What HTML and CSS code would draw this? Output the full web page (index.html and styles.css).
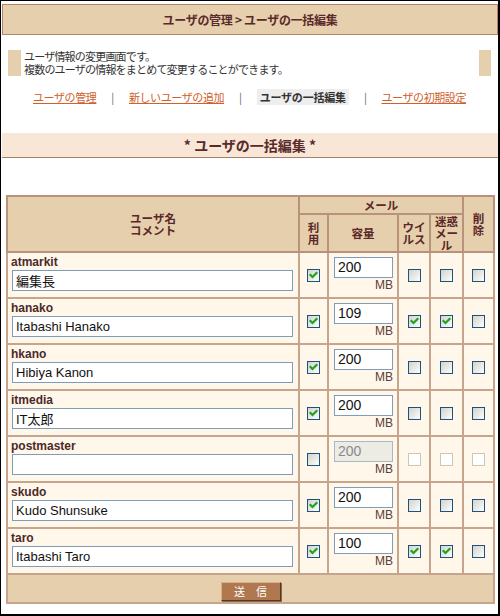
FILE: index.html
```html
<!DOCTYPE html>
<html lang="ja">
<head>
<meta charset="utf-8">
<title>ユーザの一括編集</title>
<link rel="stylesheet" href="styles.css">
</head>
<body>
<div class="frame">
  <div class="topbar">ユーザの管理 &gt; ユーザの一括編集</div>
  <div class="info">ユーザ情報の変更画面です。<br>複数のユーザの情報をまとめて変更することができます。</div>
  <div class="nav">
    <a href="#">ユーザの管理</a><span class="sep">|</span>
    <a href="#">新しいユーザの追加</a><span class="sep">|</span>
    <span class="current">ユーザの一括編集</span><span class="sep">|</span>
    <a href="#">ユーザの初期設定</a>
  </div>
  <h2 class="section">* ユーザの一括編集 *</h2>
  <table class="grid">
    <colgroup>
      <col class="c-name"><col class="c-use"><col class="c-cap"><col class="c-vir"><col class="c-spam"><col class="c-del">
    </colgroup>
    <tr class="h1">
      <th rowspan="2">ユーザ名<br>コメント</th>
      <th colspan="4">メール</th>
      <th rowspan="2">削<br>除</th>
    </tr>
    <tr class="h2">
      <th>利<br>用</th>
      <th>容量</th>
      <th>ウイ<br>ルス</th>
      <th>迷惑<br>メー<br>ル</th>
    </tr>
    <tr class="row">
      <td class="name"><div class="uid">atmarkit</div><input class="cmt" type="text" value="編集長"></td>
      <td class="ck"><span class="cb on"><svg viewBox="0 0 11 11"><polyline points="2.5,5 4.5,7 8.5,3"/></svg></span></td>
      <td class="cap"><input class="num" type="text" value="200"><div class="mb">MB</div></td>
      <td class="ck"><span class="cb"></span></td>
      <td class="ck"><span class="cb"></span></td>
      <td class="ck"><span class="cb"></span></td>
    </tr>
    <tr class="row">
      <td class="name"><div class="uid">hanako</div><input class="cmt" type="text" value="Itabashi Hanako"></td>
      <td class="ck"><span class="cb on"><svg viewBox="0 0 11 11"><polyline points="2.5,5 4.5,7 8.5,3"/></svg></span></td>
      <td class="cap"><input class="num" type="text" value="109"><div class="mb">MB</div></td>
      <td class="ck"><span class="cb on"><svg viewBox="0 0 11 11"><polyline points="2.5,5 4.5,7 8.5,3"/></svg></span></td>
      <td class="ck"><span class="cb on"><svg viewBox="0 0 11 11"><polyline points="2.5,5 4.5,7 8.5,3"/></svg></span></td>
      <td class="ck"><span class="cb"></span></td>
    </tr>
    <tr class="row">
      <td class="name"><div class="uid">hkano</div><input class="cmt" type="text" value="Hibiya Kanon"></td>
      <td class="ck"><span class="cb on"><svg viewBox="0 0 11 11"><polyline points="2.5,5 4.5,7 8.5,3"/></svg></span></td>
      <td class="cap"><input class="num" type="text" value="200"><div class="mb">MB</div></td>
      <td class="ck"><span class="cb"></span></td>
      <td class="ck"><span class="cb"></span></td>
      <td class="ck"><span class="cb"></span></td>
    </tr>
    <tr class="row">
      <td class="name"><div class="uid">itmedia</div><input class="cmt" type="text" value="IT太郎"></td>
      <td class="ck"><span class="cb on"><svg viewBox="0 0 11 11"><polyline points="2.5,5 4.5,7 8.5,3"/></svg></span></td>
      <td class="cap"><input class="num" type="text" value="200"><div class="mb">MB</div></td>
      <td class="ck"><span class="cb"></span></td>
      <td class="ck"><span class="cb"></span></td>
      <td class="ck"><span class="cb"></span></td>
    </tr>
    <tr class="row">
      <td class="name"><div class="uid">postmaster</div><input class="cmt" type="text" value=""></td>
      <td class="ck"><span class="cb"></span></td>
      <td class="cap"><input class="num off" type="text" value="200" disabled><div class="mb">MB</div></td>
      <td class="ck"><span class="cb dis"></span></td>
      <td class="ck"><span class="cb dis"></span></td>
      <td class="ck"><span class="cb dis"></span></td>
    </tr>
    <tr class="row">
      <td class="name"><div class="uid">skudo</div><input class="cmt" type="text" value="Kudo Shunsuke"></td>
      <td class="ck"><span class="cb on"><svg viewBox="0 0 11 11"><polyline points="2.5,5 4.5,7 8.5,3"/></svg></span></td>
      <td class="cap"><input class="num" type="text" value="200"><div class="mb">MB</div></td>
      <td class="ck"><span class="cb"></span></td>
      <td class="ck"><span class="cb"></span></td>
      <td class="ck"><span class="cb"></span></td>
    </tr>
    <tr class="row">
      <td class="name"><div class="uid">taro</div><input class="cmt" type="text" value="Itabashi Taro"></td>
      <td class="ck"><span class="cb on"><svg viewBox="0 0 11 11"><polyline points="2.5,5 4.5,7 8.5,3"/></svg></span></td>
      <td class="cap"><input class="num" type="text" value="100"><div class="mb">MB</div></td>
      <td class="ck"><span class="cb on"><svg viewBox="0 0 11 11"><polyline points="2.5,5 4.5,7 8.5,3"/></svg></span></td>
      <td class="ck"><span class="cb on"><svg viewBox="0 0 11 11"><polyline points="2.5,5 4.5,7 8.5,3"/></svg></span></td>
      <td class="ck"><span class="cb"></span></td>
    </tr>
    <tr class="foot">
      <td colspan="6"><button class="send" type="button">送　信</button></td>
    </tr>
  </table>
</div>
</body>
</html>
```
FILE: styles.css
```css
html, body {
  margin: 0;
  padding: 0;
  background: #fff;
}

.frame {
  width: 500px;
  height: 616px;
  box-sizing: border-box;
  border-style: solid;
  border-color: #000;
  border-width: 1px 2px 2px 1px;
  overflow: hidden;
  font-family: "Noto Sans CJK JP", sans-serif;
  color: #333;
}

.topbar {
  margin: 3px 0 0 1px;
  width: 496px;
  height: 31px;
  box-sizing: border-box;
  border: 1px solid #b3836a;
  background: #e6cfad;
  color: #5a2a2a;
  font-weight: bold;
  font-size: 12px;
  line-height: 29px;
  text-align: center;
  letter-spacing: -0.3px;
}

.info {
  margin: 15px 0 0 7px;
  width: 483px;
  height: 26px;
  box-sizing: border-box;
  border-left: 13px solid #e6cfad;
  border-right: 12px solid #e6cfad;
  padding-left: 3px;
  font-size: 11px;
  line-height: 13px;
  letter-spacing: -0.8px;
  color: #333;
}

.nav {
  margin-top: 13px;
  height: 16px;
  display: flex;
  justify-content: center;
  align-items: center;
  gap: 15px;
  font-size: 11px;
  line-height: 16px;
  letter-spacing: -0.4px;
}

.nav a {
  color: #d0602c;
  text-decoration: underline;
}

.nav .sep {
  color: #666;
}

.nav .current {
  background: #eeeeee;
  color: #333;
  font-weight: bold;
  padding: 0 3px;
  letter-spacing: -0.2px;
}

.section {
  margin: 28px 0 0 1px;
  width: 496px;
  height: 25px;
  box-sizing: border-box;
  background: #f8e7d7;
  border-bottom: 1px solid #a97d66;
  color: #5a2a2a;
  font-size: 14px;
  font-weight: bold;
  line-height: 24px;
  text-align: center;
}

.grid {
  margin: 37px 0 0 5px;
  width: 487px;
  table-layout: fixed;
  border-collapse: collapse;
  border: 2px solid #b48a6e;
}

.c-name { width: 292px; }
.c-use { width: 29px; }
.c-cap { width: 70px; }
.c-vir { width: 32px; }
.c-spam { width: 33px; }
.c-del { width: 31px; }

.grid th,
.grid td {
  border: 2px solid #c6a58c;
  padding: 0;
}

.grid th {
  background: #e6cfad;
  color: #5a2828;
  font-size: 11.5px;
  font-weight: bold;
  line-height: 12px;
  text-align: center;
  vertical-align: middle;
  border-color: #b8927a;
}

.h1 { height: 18px; }
.h2 { height: 38px; }
.row { height: 46px; }
.foot { height: 29px; }

.grid td {
  background: #fff7e9;
}

.name {
  vertical-align: top;
  padding: 2px 4px 0 3px !important;
}

.uid {
  font-family: "Liberation Sans", "Noto Sans CJK JP", sans-serif;
  font-weight: bold;
  font-size: 12px;
  line-height: 14px;
  color: #4b2a2a;
}

.cmt {
  display: block;
  box-sizing: border-box;
  width: 281px;
  height: 21px;
  margin: 1px 0 0 1px;
  padding: 0 3px;
  border: 1px solid #7f9db9;
  background: #fff;
  color: #111;
  font-family: "Liberation Sans", "Noto Sans CJK JP", sans-serif;
  font-size: 13px;
  outline: none;
}

.cap {
  vertical-align: top;
  padding: 4px 5px 0 5px !important;
}

.num {
  display: block;
  box-sizing: border-box;
  width: 59px;
  height: 21px;
  margin: 0 auto;
  padding: 0 3px 2px;
  border: 1px solid #7f9db9;
  background: #fff;
  color: #111;
  font-family: "Liberation Sans", sans-serif;
  font-size: 14px;
  outline: none;
}

.num.off {
  background: #ecebe4;
  color: #8a8a8a;
  border-color: #a9b8c8;
}

.mb {
  text-align: right;
  font-family: "Liberation Sans", sans-serif;
  font-size: 12px;
  line-height: 14px;
  color: #5a4040;
  margin-right: -1px;
}

.ck {
  text-align: center;
  vertical-align: middle;
  line-height: 0;
}

.cb {
  display: inline-block;
  width: 13px;
  height: 13px;
  box-sizing: border-box;
  border: 1px solid #1c5180;
  background: linear-gradient(135deg, #d4d4cd 0%, #f0f0ec 70%, #ffffff 100%);
  vertical-align: middle;
}

.cb svg {
  display: block;
  width: 11px;
  height: 11px;
}

.cb polyline {
  fill: none;
  stroke: #21a121;
  stroke-width: 2.2;
  stroke-linecap: square;
}

.cb.dis {
  border-color: #cac8bb;
  background: #fff;
}

.foot td {
  background: #e6cfad;
  text-align: center;
  vertical-align: middle;
}

.send {
  width: 60px;
  height: 19px;
  padding: 0;
  margin: 0;
  box-sizing: border-box;
  background: #b0784f;
  color: #fff;
  border: 1px solid;
  border-color: #dcb08c #5c3520 #5c3520 #dcb08c;
  box-shadow: 1px 1px 0 #8a6a56;
  font-family: "Noto Sans CJK JP", sans-serif;
  font-size: 11px;
  line-height: 17px;
  vertical-align: middle;
}
```
